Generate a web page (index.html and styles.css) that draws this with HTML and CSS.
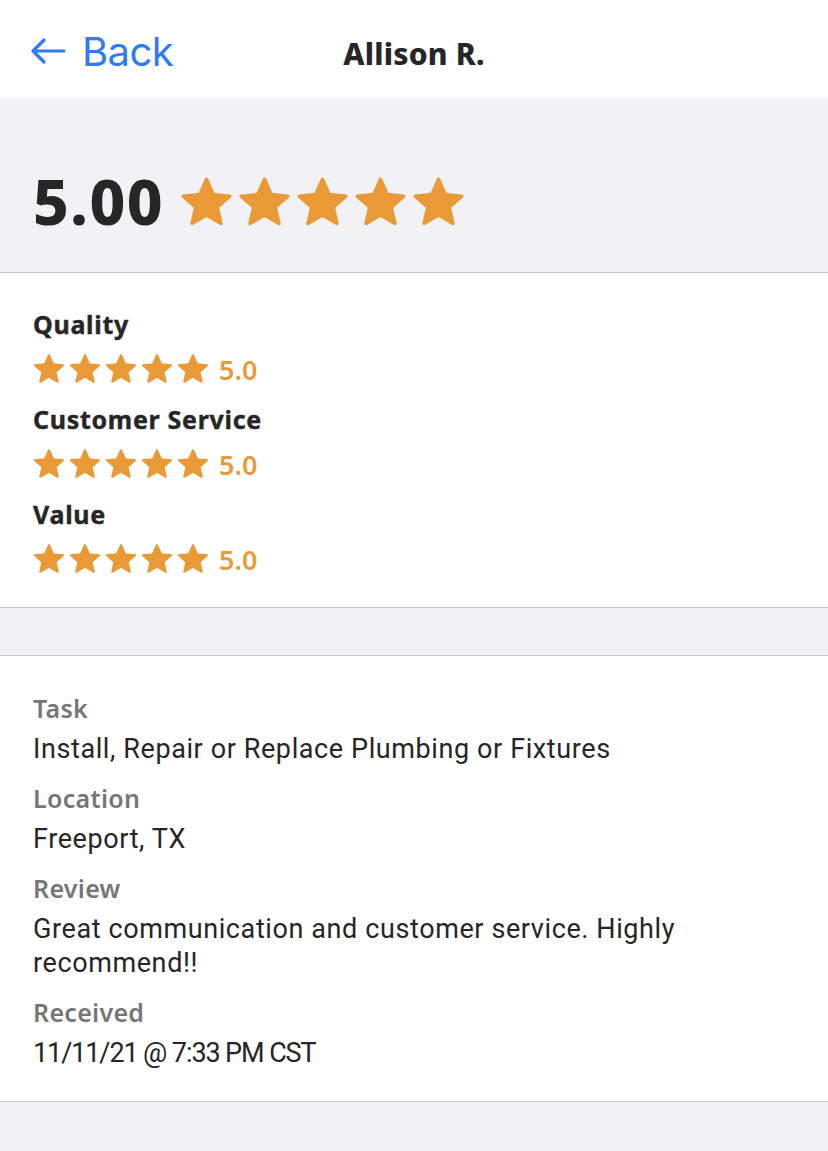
FILE: index.html
```html
<!DOCTYPE html>
<html lang="en">
<head>
<meta charset="utf-8">
<title>Allison R.</title>
<link rel="stylesheet" href="styles.css">
</head>
<body>
<svg width="0" height="0" class="defs" aria-hidden="true">
  <defs>
    <symbol id="star" viewBox="1.2 1.9 21.6 19.5">
      <path d="M12 2.6l2.75 6.2 6.75.65-5.1 4.5 1.5 6.65L12 17.2l-5.9 3.4 1.5-6.65-5.1-4.5 6.75-.65z" fill="#E99A37" stroke="#E99A37" stroke-width="1.4" stroke-linejoin="round"/>
    </symbol>
  </defs>
</svg>
<header class="nav">
  <a class="back" href="#">
    <svg class="back-arrow" viewBox="0 0 36 28" width="36" height="28"><path d="M34 14H3M14 3L3 14l11 11" fill="none" stroke="#2F7BF5" stroke-width="3.2" stroke-linecap="round" stroke-linejoin="round"/></svg>
    <span>Back</span>
  </a>
  <h1 class="title">Allison R.</h1>
  <div class="spacer"></div>
</header>

<section class="summary">
  <span class="score">5.00</span>
  <div class="stars stars-lg">
    <svg><use href="#star"/></svg><svg><use href="#star"/></svg><svg><use href="#star"/></svg><svg><use href="#star"/></svg><svg><use href="#star"/></svg>
  </div>
</section>

<section class="ratings">
  <div class="rating">
    <div class="rating-label">Quality</div>
    <div class="rating-row">
      <div class="stars stars-sm"><svg><use href="#star"/></svg><svg><use href="#star"/></svg><svg><use href="#star"/></svg><svg><use href="#star"/></svg><svg><use href="#star"/></svg></div>
      <span class="rating-value">5.0</span>
    </div>
  </div>
  <div class="rating">
    <div class="rating-label">Customer Service</div>
    <div class="rating-row">
      <div class="stars stars-sm"><svg><use href="#star"/></svg><svg><use href="#star"/></svg><svg><use href="#star"/></svg><svg><use href="#star"/></svg><svg><use href="#star"/></svg></div>
      <span class="rating-value">5.0</span>
    </div>
  </div>
  <div class="rating">
    <div class="rating-label">Value</div>
    <div class="rating-row">
      <div class="stars stars-sm"><svg><use href="#star"/></svg><svg><use href="#star"/></svg><svg><use href="#star"/></svg><svg><use href="#star"/></svg><svg><use href="#star"/></svg></div>
      <span class="rating-value">5.0</span>
    </div>
  </div>
</section>

<div class="gap"></div>

<section class="details">
  <div class="field">
    <div class="field-label">Task</div>
    <div class="field-value">Install, Repair or Replace Plumbing or Fixtures</div>
  </div>
  <div class="field">
    <div class="field-label">Location</div>
    <div class="field-value">Freeport, TX</div>
  </div>
  <div class="field">
    <div class="field-label">Review</div>
    <div class="field-value">Great communication and customer service. Highly recommend!!</div>
  </div>
  <div class="field">
    <div class="field-label">Received</div>
    <div class="field-value field-date">11/11/21 @ 7:33 PM CST</div>
  </div>
</section>
<div class="bottom"></div>
</body>
</html>
```

FILE: styles.css
```css
* { box-sizing: border-box; }

html, body {
  margin: 0;
  padding: 0;
}

body {
  background: #F1F1F6;
  font-family: "Roboto", "Liberation Sans", sans-serif;
  color: #262626;
  width: 828px;
  min-height: 1151px;
}

.defs { position: absolute; }

.nav {
  height: 98px;
  background: #fff;
  display: grid;
  grid-template-columns: 1fr auto 1fr;
  align-items: center;
  padding: 4px 30px 0 30px;
}

.back {
  display: flex;
  align-items: center;
  gap: 16px;
  color: #2F7BF5;
  text-decoration: none;
  font-family: "Inter", "Roboto", sans-serif;
  font-size: 40px;
  font-weight: 400;
  letter-spacing: -0.6px;
}

.back-arrow { display: block; }

.title {
  margin: 0;
  padding-top: 4px;
  font-size: 30px;
  font-weight: 800;
  font-family: "Noto Sans", "Roboto", sans-serif;
  letter-spacing: 0.2px;
}

.summary {
  display: flex;
  align-items: center;
  gap: 16px;
  padding: 68px 33px 36px;
  border-bottom: 1px solid #C8C8CC;
}

.score {
  font-family: "Noto Sans", "Roboto", sans-serif;
  font-size: 62px;
  line-height: 70px;
  font-weight: 800;
  letter-spacing: 1.5px;
}

.stars { display: flex; }

.stars-lg { gap: 5px; }
.stars-lg svg { width: 53px; height: 49px; }

.stars-sm { gap: 4px; }
.stars-sm svg { width: 32px; height: 29px; }

.ratings {
  background: #fff;
  padding: 34px 33px 31px;
  display: flex;
  flex-direction: column;
  gap: 16px;
  border-bottom: 1px solid #C8C8CC;
}

.rating {
  display: flex;
  flex-direction: column;
  gap: 9px;
}

.rating-label {
  font-family: "Noto Sans", "Roboto", sans-serif;
  font-size: 25px;
  font-weight: 700;
  line-height: 34px;
  letter-spacing: 0.7px;
  -webkit-text-stroke: 0.4px #262626;
}

.rating-row {
  display: flex;
  align-items: center;
  gap: 10px;
  height: 36px;
}

.rating-value {
  color: #E99A37;
  font-family: "Noto Sans", "Roboto", sans-serif;
  font-size: 27px;
  font-weight: 600;
  padding-top: 2px;
}

.gap {
  height: 48px;
  border-bottom: 1px solid #C8C8CC;
}

.details {
  background: #fff;
  padding: 35px 33px 31px;
  display: flex;
  flex-direction: column;
  gap: 15px;
  border-bottom: 1px solid #C8C8CC;
}

.field {
  display: flex;
  flex-direction: column;
  gap: 7px;
}

.field-label {
  color: #767676;
  font-family: "Noto Sans", "Roboto", sans-serif;
  font-size: 25px;
  font-weight: 600;
  line-height: 34px;
  letter-spacing: 0.3px;
}

.field-value {
  font-size: 27px;
  line-height: 34px;
  letter-spacing: 0.6px;
  padding-right: 40px;
}

.field-date { letter-spacing: -1.1px; }

.bottom { height: 50px; }
```
